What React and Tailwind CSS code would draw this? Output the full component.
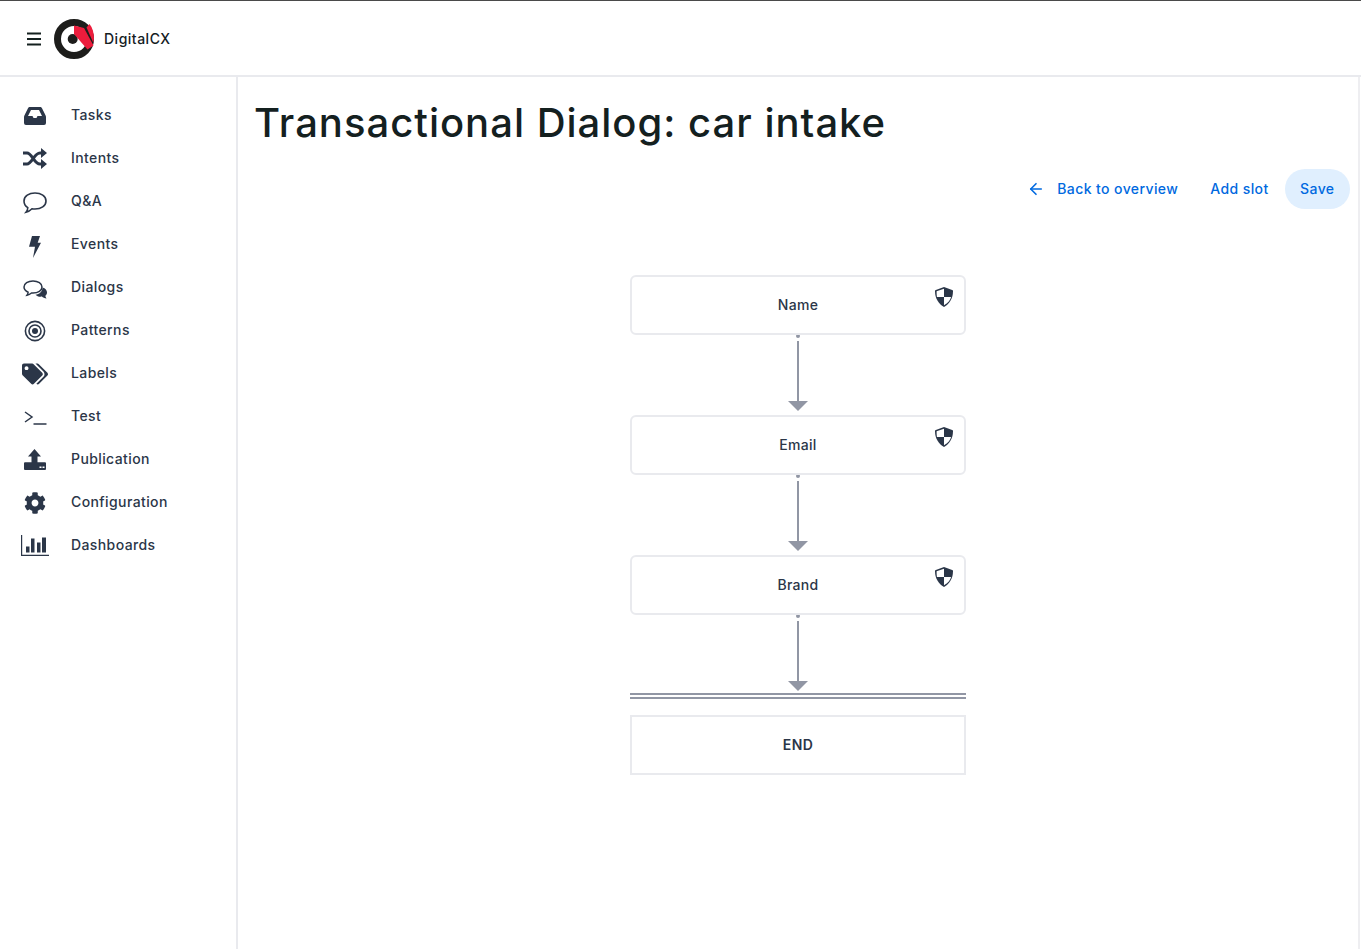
import React from 'react';
import { FaTags, FaCog } from 'react-icons/fa';
import { ArrowLeft } from 'lucide-react';

const font = { fontFamily: 'Inter, "Liberation Sans", sans-serif' };

const Tray = () => (
  <svg width="22" height="18" viewBox="0 0 22 18" fill="currentColor">
    <path fillRule="evenodd" d="M6 0h10c1 0 1.600.5 2 1.200l3.500 7c.3.6.5 1.200.5 1.900V16a2 2 0 01-2 2H2a2 2 0 01-2-2v-5.900c0-.7.2-1.300.5-1.900L4 1.200C4.400.5 5 0 6 0zM7 3L4 9h4.500l1 2h3l1-2H18l-3-6z" />
  </svg>
);

const Shuffle = () => (
  <svg width="24" height="21" viewBox="0 0 24 21" fill="currentColor">
    <path d="M0 5h4c5 0 7 11 13 11h2M0 16h4c5 0 7-11 13-11h2" fill="none" stroke="currentColor" strokeWidth="3" />
    <path d="M18 0l6 5-6 5zM18 11l6 5-6 5z" />
  </svg>
);

const Bubble = () => (
  <svg width="24" height="22" viewBox="0 0 24 22" fill="none" stroke="currentColor" strokeWidth="1.600">
    <path d="M12 1c6 0 11 3 11 8s-5 8-11 8c-1 0-2 0-3-.2-1.500 1.500-3.500 3-6 3.500 1-1.200 1.700-2.800 1.800-4.600C2.500 14.200 1 11.800 1 9c0-5 5-8 11-8z" />
  </svg>
);

const Bolt = () => (
  <svg width="12" height="22" viewBox="0 0 12 22" fill="currentColor">
    <path d="M3 0h8L8.700 6.700H12L4 22l2-11.300H0z" />
  </svg>
);

const Chats = () => (
  <svg width="24" height="19" viewBox="0 0 24 19" fill="none" stroke="currentColor" strokeWidth="1.500">
    <path d="M10 1c5 0 9 2.500 9 6s-4 6-9 6h-1.500c-1.200 1-2.700 1.800-4.500 2.200.7-1 1-2 1.100-3C2.500 11 1 9.200 1 7c0-3.500 4-6 9-6z" />
    <path d="M19.500 7.500c3 .8 4.500 3 4.500 5 0 1.300-.6 2.500-1.700 3.300.1.800.5 1.800 1.200 2.700-2-.2-3.600-1-4.600-1.900-2.500.4-5-.3-6.400-1.900 3.700-.2 7-3 7-7.200z" fill="currentColor" strokeWidth="0" />
  </svg>
);

const Bullseye = () => (
  <svg width="22" height="22" viewBox="0 0 22 22" fill="none" stroke="currentColor">
    <circle cx="11" cy="11" r="9.600" strokeWidth="1.600" />
    <circle cx="11" cy="11" r="6" strokeWidth="1.600" />
    <circle cx="11" cy="11" r="3" fill="currentColor" strokeWidth="0" />
  </svg>
);

const Terminal = () => (
  <svg width="23" height="14" viewBox="0 0 23 14" fill="none" stroke="currentColor" strokeWidth="1.500">
    <path d="M1 1l7 5-7 5" />
    <path d="M9.500 13h13" />
  </svg>
);

const Publish = () => (
  <svg width="24" height="22" viewBox="0 0 24 22" fill="currentColor">
    <path d="M11.500 0l6.500 7.500h-3.500V14h-6V7.500H5z" />
    <path d="M1 14.200a1 1 0 011-1h20a1 1 0 011 1V20a1 1 0 01-1 1H2a1 1 0 01-1-1z" />
    <rect x="16.500" y="17.500" width="2" height="1.500" fill="#fff" />
    <rect x="19.500" y="17.500" width="2" height="1.500" fill="#fff" />
  </svg>
);

const Bars = () => (
  <svg width="28" height="21" viewBox="0 0 28 21" fill="currentColor">
    <path d="M0 0h1.200v19.800H28V21H0z" />
    <rect x="5" y="11.500" width="3.500" height="6" />
    <rect x="10" y="3.500" width="3.500" height="14" />
    <rect x="16" y="7.500" width="3.500" height="10" />
    <rect x="21" y="2.500" width="4" height="15" />
  </svg>
);

const Shield = () => (
  <svg width="18" height="20" viewBox="0 0 18 20" className="text-[#2b3648]">
    <path d="M9 0l8.200 3c.8.300.8.800.8 1.500C18 11 14.500 17 9 20 3.500 17 0 11 0 4.500 0 3.800 0 3.300.8 3z" fill="currentColor" />
    <path d="M9 1.800V10H1.900C1.600 8 1.600 6 1.600 4.300zM9 10h7.100c-.7 3.200-3.200 6.200-7.100 8.200z" fill="#fff" />
  </svg>
);

const Logo = () => (
  <svg width="40" height="40" viewBox="0 0 40 40">
    <circle cx="20" cy="20" r="16.500" fill="none" stroke="#1d1d1b" strokeWidth="7" />
    <circle cx="18.700" cy="20" r="5" fill="#1d1d1b" />
    <path d="M20 6.500L30 9l9.500 17.500-6 4L20 15z" fill="#ed1c3c" />
    <path d="M32.500 8.500L35.500 5C38.500 8.500 40 14 40 20l-.8 3.500z" fill="#ed1c3c" />
  </svg>
);

const navItems = [
  { label: 'Tasks', icon: <Tray />, offset: 'mt-[2px]' },
  { label: 'Intents', icon: <Shuffle />, offset: 'mt-[2px]' },
  { label: 'Q&A', icon: <Bubble />, offset: 'mt-[5px]' },
  { label: 'Events', icon: <Bolt />, offset: 'mt-[6px]' },
  { label: 'Dialogs', icon: <Chats />, offset: 'mt-[5px]' },
  { label: 'Patterns', icon: <Bullseye />, offset: 'mt-[2px]' },
  { label: 'Labels', icon: <FaTags size={26} />, offset: 'mt-[2px]' },
  { label: 'Test', icon: <Terminal />, offset: 'mt-[5px]' },
  { label: 'Publication', icon: <Publish />, offset: 'mt-[3px]' },
  { label: 'Configuration', icon: <FaCog size={22} />, offset: 'mt-[2px]' },
  { label: 'Dashboards', icon: <Bars />, offset: 'mt-[2px]' },
];

const Connector = ({ last }) => (
  <div className={`flex flex-col items-center ${last ? 'h-[78px]' : 'h-[80px]'}`}>
    <div className="-mt-[1px] h-[4px] w-[4px] rounded-full bg-[#9196a4]" />
    <div className="mt-[3px] w-[2px] flex-1 bg-[#9196a4]" />
    <div className="h-0 w-0 border-x-[10px] border-t-[10px] border-x-transparent border-t-[#9196a4]" />
    <div className={last ? 'h-[2px]' : 'h-[4px]'} />
  </div>
);

const Slot = ({ name }) => (
  <div className="relative flex h-[60px] w-[336px] items-center justify-center rounded-md border-2 border-[#e9eaee] text-sm font-medium tracking-[0.3px] text-[#2b3648]">
    {name}
    <span className="absolute right-[11px] top-[10px]"><Shield /></span>
  </div>
);

export default function App() {
  return (
    <div className="flex h-[949px] flex-col overflow-hidden border-t border-[#4a4a4a] bg-white" style={font}>
      <header className="flex h-[76px] shrink-0 items-center border-b-2 border-[#e9eaee] pl-[25px] pt-[2px]">
        <svg width="18" height="18" viewBox="0 0 18 18" fill="none" stroke="#14201f" strokeWidth="2.200">
          <path d="M2 3.500h14M2 9h14M2 14.500h14" />
        </svg>
        <div className="ml-[11px]"><Logo /></div>
        <span className="ml-[10px] text-sm font-medium tracking-[0.5px] text-[#14201f]">DigitalCX</span>
      </header>
      <div className="flex flex-1">
        <nav className="w-[238px] shrink-0 border-r-2 border-[#e9eaee] pt-[16px]">
          {navItems.map((item) => (
            <div key={item.label} className="flex h-[43px] items-center text-[#2b3648]">
              <span className={`mr-[1px] flex w-[70px] justify-center ${item.offset}`}>{item.icon}</span>
              <span className="text-sm font-medium tracking-[0.4px]">{item.label}</span>
            </div>
          ))}
        </nav>
        <main className="mr-[1px] flex-1 border-r-2 border-[#eeeef1]">
          <h1 className="pl-[16px] pt-[21px] text-[40px] font-medium leading-[50px] tracking-[1px] text-[#14201f]">
            Transactional Dialog: car intake
          </h1>
          <div className="mt-[21px] flex items-center justify-end gap-4 pr-[8px] text-sm font-medium tracking-[0.4px] text-[#0069e0]">
            <span className="flex items-center gap-[12px]">
              <ArrowLeft size={18} strokeWidth={2.200} />
              Back to overview
            </span>
            <span className="ml-4">Add slot</span>
            <span className="flex h-10 items-center rounded-full bg-[#e0effe] px-[15.500px]">Save</span>
          </div>
          <div className="mt-[66px] flex flex-col items-center">
            <Slot name="Name" />
            <Connector />
            <Slot name="Email" />
            <Connector />
            <Slot name="Brand" />
            <Connector last />
            <div className="h-[6px] w-[336px] border-y-2 border-[#9196a4]" />
            <div className="mt-[16px] flex h-[60px] w-[336px] items-center justify-center border-2 border-[#e9eaee] text-sm font-semibold tracking-[0.4px] text-[#2b3648]">
              END
            </div>
          </div>
        </main>
      </div>
    </div>
  );
}
